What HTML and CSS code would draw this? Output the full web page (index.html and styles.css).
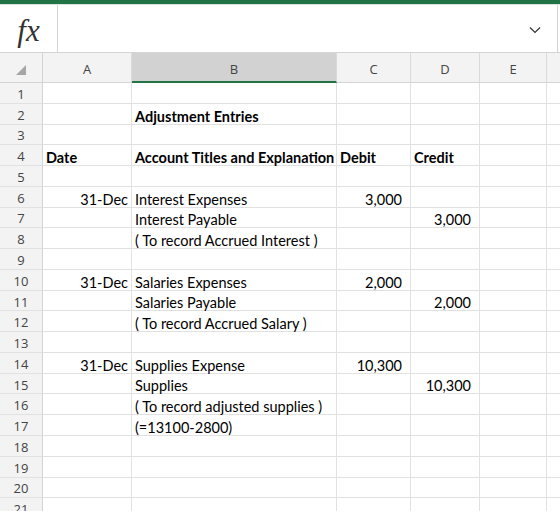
FILE: index.html
```html
<!DOCTYPE html>
<html lang="en">
<head>
  <meta charset="UTF-8" />
  <meta name="viewport" content="width=device-width, initial-scale=1.0"/>
  <title>Adjustment Entries</title>
  <link rel="stylesheet" href="styles.css">
</head>
<body>
  <div class="topbar"></div>

  <div class="formula-bar">
    <div class="fx">fx</div>
    <div class="formula-input">
      <svg class="chevron" width="12" height="8" viewBox="0 0 12 8">
        <path d="M1 1.5 L6 6.5 L11 1.5" fill="none" stroke="#333" stroke-width="1.2"/>
      </svg>
    </div>
  </div>

  <div class="sheet">
    <div class="row head">
      <div class="corner">
        <svg width="12" height="12" viewBox="0 0 12 12"><polygon points="11,1 11,11 1,11" fill="#a6a6a6"/></svg>
      </div>
      <div class="colh">A</div>
      <div class="colh sel">B</div>
      <div class="colh">C</div>
      <div class="colh">D</div>
      <div class="colh">E</div>
      <div class="colh last"></div>
    </div>

    <div class="row"><div class="rh">1</div><div class="c"></div><div class="c"></div><div class="c"></div><div class="c"></div><div class="c"></div><div class="c last"></div></div>
    <div class="row"><div class="rh">2</div><div class="c"></div><div class="c bold">Adjustment Entries</div><div class="c"></div><div class="c"></div><div class="c"></div><div class="c last"></div></div>
    <div class="row"><div class="rh">3</div><div class="c"></div><div class="c"></div><div class="c"></div><div class="c"></div><div class="c"></div><div class="c last"></div></div>
    <div class="row"><div class="rh">4</div><div class="c bold">Date</div><div class="c bold">Account Titles and Explanation</div><div class="c bold">Debit</div><div class="c bold">Credit</div><div class="c"></div><div class="c last"></div></div>
    <div class="row"><div class="rh">5</div><div class="c"></div><div class="c"></div><div class="c"></div><div class="c"></div><div class="c"></div><div class="c last"></div></div>
    <div class="row"><div class="rh">6</div><div class="c date">31-Dec</div><div class="c">Interest Expenses</div><div class="c num">3,000</div><div class="c"></div><div class="c"></div><div class="c last"></div></div>
    <div class="row"><div class="rh">7</div><div class="c"></div><div class="c">Interest Payable</div><div class="c"></div><div class="c num">3,000</div><div class="c"></div><div class="c last"></div></div>
    <div class="row"><div class="rh">8</div><div class="c"></div><div class="c">( To record Accrued Interest )</div><div class="c"></div><div class="c"></div><div class="c"></div><div class="c last"></div></div>
    <div class="row"><div class="rh">9</div><div class="c"></div><div class="c"></div><div class="c"></div><div class="c"></div><div class="c"></div><div class="c last"></div></div>
    <div class="row"><div class="rh">10</div><div class="c date">31-Dec</div><div class="c">Salaries Expenses</div><div class="c num">2,000</div><div class="c"></div><div class="c"></div><div class="c last"></div></div>
    <div class="row"><div class="rh">11</div><div class="c"></div><div class="c">Salaries Payable</div><div class="c"></div><div class="c num">2,000</div><div class="c"></div><div class="c last"></div></div>
    <div class="row"><div class="rh">12</div><div class="c"></div><div class="c">( To record Accrued Salary )</div><div class="c"></div><div class="c"></div><div class="c"></div><div class="c last"></div></div>
    <div class="row"><div class="rh">13</div><div class="c"></div><div class="c"></div><div class="c"></div><div class="c"></div><div class="c"></div><div class="c last"></div></div>
    <div class="row"><div class="rh">14</div><div class="c date">31-Dec</div><div class="c">Supplies Expense</div><div class="c num">10,300</div><div class="c"></div><div class="c"></div><div class="c last"></div></div>
    <div class="row"><div class="rh">15</div><div class="c"></div><div class="c">Supplies</div><div class="c"></div><div class="c num">10,300</div><div class="c"></div><div class="c last"></div></div>
    <div class="row"><div class="rh">16</div><div class="c"></div><div class="c">( To record adjusted supplies )</div><div class="c"></div><div class="c"></div><div class="c"></div><div class="c last"></div></div>
    <div class="row"><div class="rh">17</div><div class="c"></div><div class="c">(=13100-2800)</div><div class="c"></div><div class="c"></div><div class="c"></div><div class="c last"></div></div>
    <div class="row"><div class="rh">18</div><div class="c"></div><div class="c"></div><div class="c"></div><div class="c"></div><div class="c"></div><div class="c last"></div></div>
    <div class="row"><div class="rh">19</div><div class="c"></div><div class="c"></div><div class="c"></div><div class="c"></div><div class="c"></div><div class="c last"></div></div>
    <div class="row"><div class="rh">20</div><div class="c"></div><div class="c"></div><div class="c"></div><div class="c"></div><div class="c"></div><div class="c last"></div></div>
    <div class="row"><div class="rh">21</div><div class="c"></div><div class="c"></div><div class="c"></div><div class="c"></div><div class="c"></div><div class="c last"></div></div>
  </div>
</body>
</html>
```

FILE: styles.css
```css
body { margin: 0; background: #fff; overflow: hidden; font-family: Lato, "Liberation Sans", sans-serif; }

.topbar { height: 4px; background: #217346; border-bottom: 1px solid #d6e6dc; }

.formula-bar {
  display: flex; height: 47px; border-bottom: 1px solid #d4d4d4;
}
.fx {
  width: 58px; border-right: 1px solid #d4d4d4;
  display: flex; align-items: center; justify-content: center;
  font-family: "Liberation Serif", serif; font-style: italic; font-size: 31px; color: #333;
  padding-top: 5px; box-sizing: border-box;
}
.formula-input {
  width: 500px; border-right: 1px solid #d4d4d4;
  display: flex; align-items: center; justify-content: flex-end; padding-right: 16px;
  box-sizing: border-box;
}
.chevron { margin-top: 2px; }

.sheet {
  display: grid;
  grid-template-columns: 43px 89px 205px 74px 69px 67px 13px;
  grid-template-rows: 30px;
  grid-auto-rows: 20.78px;
}
.row { display: contents; }

.corner, .colh, .rh {
  background: #f3f3f3; color: #444;
  font-family: "Open Sans", "Noto Sans", sans-serif; font-size: 13px;
  box-sizing: border-box;
  display: flex; align-items: center; justify-content: center;
}
.corner {
  border-right: 1px solid #d4d4d4; border-bottom: 1px solid #d4d4d4;
  justify-content: flex-start; align-items: flex-start; padding: 11px 0 0 15px;
}
.colh { border-right: 1px solid #dadada; border-bottom: 1px solid #d4d4d4; padding-top: 3px; }
.colh.sel { background: #d2d2d2; border-bottom: 2px solid #217346; padding-top: 4px; }
.colh.last { border-right: none; }

.rh { border-right: 1px solid #d4d4d4; border-bottom: 1px solid #e1e1e1; padding-top: 2px; }

.c {
  box-sizing: border-box; border-right: 1px solid #e1e1e1; border-bottom: 1px solid #e1e1e1;
  font-size: 14.5px; color: #000; white-space: nowrap;
  display: flex; align-items: flex-end; padding: 0 3px; line-height: 15px;
}
.c.last { border-right: none; }
.bold { font-weight: bold; }
.date { justify-content: flex-end; }
.num { justify-content: flex-end; padding-right: 8px; }
```
